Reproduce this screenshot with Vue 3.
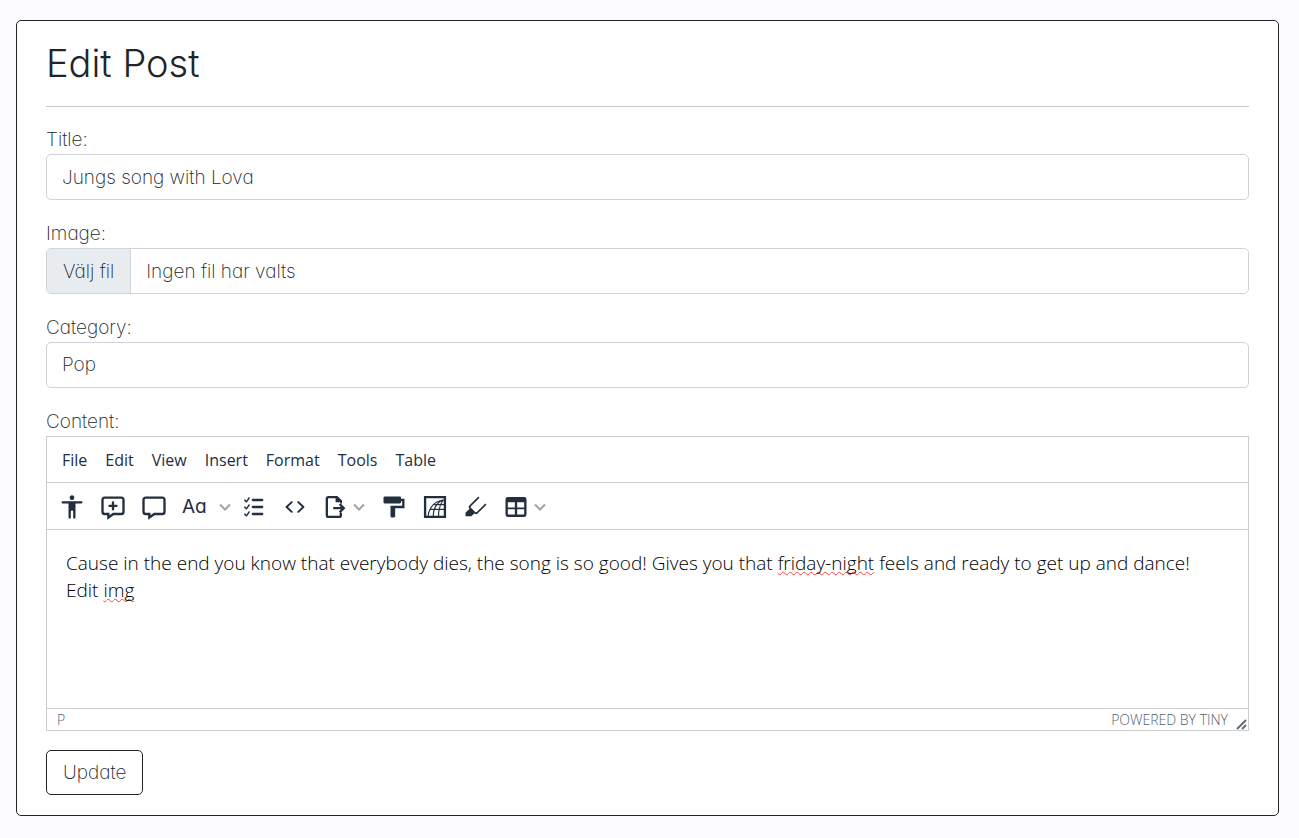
<script setup>
import { ref } from 'vue'

const title = ref('Jungs song with Lova')
const category = ref('Pop')
const menus = ['File', 'Edit', 'View', 'Insert', 'Format', 'Tools', 'Table']
</script>

<template>
  <main class="card">
    <h1>Edit Post</h1>
    <hr />
    <form @submit.prevent>
      <div class="field">
        <label for="title">Title:</label>
        <input id="title" v-model="title" class="control" type="text" />
      </div>
      <div class="field">
        <label for="image">Image:</label>
        <div class="control file">
          <input id="image" class="file-input" type="file" />
          <span class="file-button">Välj fil</span>
          <span class="file-name">Ingen fil har valts</span>
        </div>
      </div>
      <div class="field">
        <label for="category">Category:</label>
        <select id="category" v-model="category" class="control">
          <option>Pop</option>
        </select>
      </div>
      <div class="field">
        <label id="content-label" for="content">Content:</label>
        <div class="editor">
          <div class="menubar" role="menubar">
            <button v-for="m in menus" :key="m" type="button" role="menuitem">{{ m }}</button>
          </div>
          <div class="toolbar" role="toolbar" aria-label="Formatting">
            <button type="button" aria-label="Accessibility checker">
              <svg viewBox="0 0 24 24"><path d="M12 2a2 2 0 0 1 2 2 2 2 0 0 1-2 2 2 2 0 0 1-2-2c0-1.100.9-2 2-2Zm8 7h-5v12c0 .6-.4 1-1 1a1 1 0 0 1-1-1v-5c0-.6-.4-1-1-1a1 1 0 0 0-1 1v5c0 .6-.4 1-1 1a1 1 0 0 1-1-1V9H4a1 1 0 1 1 0-2h16c.6 0 1 .4 1 1s-.4 1-1 1Z" /></svg>
            </button>
            <button type="button" aria-label="Add comment">
              <svg viewBox="0 0 24 24"><path d="m9 19 3-2h7c.6 0 1-.4 1-1V6c0-.6-.4-1-1-1H5a1 1 0 0 0-1 1v10c0 .6.4 1 1 1h4v2Zm-2 4v-4H5a3 3 0 0 1-3-3V6a3 3 0 0 1 3-3h14a3 3 0 0 1 3 3v10a3 3 0 0 1-3 3h-6.400L7 23Z" /><path d="M13 10h2a1 1 0 0 1 0 2h-2v2a1 1 0 0 1-2 0v-2H9a1 1 0 0 1 0-2h2V8a1 1 0 0 1 2 0v2Z" /></svg>
            </button>
            <button type="button" aria-label="Show comments">
              <svg viewBox="0 0 24 24"><path d="m9 19 3-2h7c.6 0 1-.4 1-1V6c0-.6-.4-1-1-1H5a1 1 0 0 0-1 1v10c0 .6.4 1 1 1h4v2Zm-2 4v-4H5a3 3 0 0 1-3-3V6a3 3 0 0 1 3-3h14a3 3 0 0 1 3 3v10a3 3 0 0 1-3 3h-6.400L7 23Z" /></svg>
            </button>
            <button type="button" class="split case" aria-label="Change case">
              <span>Aa</span>
              <svg class="chevron" viewBox="0 0 12 12"><path d="M1 3.500 6 8.500 11 3.500" /></svg>
            </button>
            <button type="button" aria-label="Checklist">
              <svg viewBox="0 0 24 24"><path d="M11 17h8a1 1 0 0 1 0 2h-8a1 1 0 0 1 0-2Zm0-6h8a1 1 0 0 1 0 2h-8a1 1 0 0 1 0-2Zm0-6h8a1 1 0 0 1 0 2h-8a1 1 0 0 1 0-2ZM7.200 16c.2-.4.6-.5.9-.3.3.2.4.6.2 1L6 20c-.2.3-.7.4-1 0l-1.300-1.300a.7.7 0 0 1 0-1c.3-.2.7-.2 1 0l.7.9 1.800-2.600Zm0-6c.2-.4.6-.5.9-.3.3.2.4.6.2 1L6 14c-.2.3-.7.4-1 0l-1.300-1.300a.7.7 0 0 1 0-1c.3-.2.7-.2 1 0l.7.9L7.200 10Zm0-6c.2-.4.6-.5.9-.3.3.2.4.6.2 1L6 8c-.2.3-.7.4-1 0L3.700 6.700a.7.7 0 0 1 0-1c.3-.2.7-.2 1 0l.7.9L7.200 4Z" /></svg>
            </button>
            <button type="button" aria-label="Source code">
              <svg viewBox="0 0 24 24"><path d="M9.800 15.700c.3.3.3.8 0 1-.3.4-.9.4-1.200 0l-4.400-4.100a.8.8 0 0 1 0-1.200l4.400-4.200c.3-.3.9-.3 1.200 0 .3.3.3.8 0 1.100L6 12l3.800 3.700Zm4.400 0c-.3.3-.3.8 0 1 .4.4.9.4 1.200 0l4.400-4.100c.3-.3.3-.9 0-1.200l-4.400-4.200a.8.8 0 0 0-1.200 0c-.3.3-.3.8 0 1.100L18 12l-3.800 3.700Z" /></svg>
            </button>
            <button type="button" class="split" aria-label="Export">
              <svg viewBox="0 0 24 24"><path class="line" d="M17 17v2a1.500 1.500 0 0 1-1.500 1.500h-9A1.500 1.500 0 0 1 5 19V5a1.500 1.500 0 0 1 1.500-1.500H13M10.500 13H19M16 9.500l3.500 3.500L16 16.500" /><path d="M12.500 2.500h1.500L18 6.500V9h-1.500V8h-4Z" /></svg>
              <svg class="chevron" viewBox="0 0 12 12"><path d="M1 3.500 6 8.500 11 3.500" /></svg>
            </button>
            <button type="button" aria-label="Format painter">
              <svg viewBox="0 0 24 24"><path d="M18 5V4c0-.5-.4-1-1-1H4a1 1 0 0 0-1 1v4c0 .6.5 1 1 1h13c.6 0 1-.4 1-1V7h1v4H9v9c0 .6.4 1 1 1h2c.6 0 1-.4 1-1v-7h8V5h-3Z" /></svg>
            </button>
            <button type="button" aria-label="Page embed">
              <svg viewBox="0 0 24 24"><path class="line" d="M3.500 3.500h17v17h-17Z" /><path class="thin" d="M6 20C7 12 12 6.500 20 6M10.500 20c0-6 3-11.500 8-14M15 20c0-5 1-10 4-14M8.500 14H20M11.500 10H20" /></svg>
            </button>
            <button type="button" aria-label="Permanent pen">
              <svg viewBox="0 0 24 24"><path d="M10.500 17.500 8 20H3v-3l3.500-3.500a2 2 0 0 1 0-3L14 3l1 1-7.300 7.300a1 1 0 0 0 0 1.400l3.600 3.600c.4.4 1 .4 1.400 0L20 9l1 1-7.600 7.600a2 2 0 0 1-2.800 0l-.1-.1Z" /></svg>
            </button>
            <button type="button" class="split" aria-label="Table">
              <svg viewBox="0 0 24 24"><path fill-rule="evenodd" d="M19 3.500a2 2 0 0 1 2 2v13a2 2 0 0 1-2 2H5a2 2 0 0 1-2-2v-13c0-1.100.9-2 2-2h14ZM5 14v4.500h6V14H5Zm14 0h-6v4.500h6V14Zm0-6h-6v4.500h6V8ZM5 12.500h6V8H5v4.500Z" /></svg>
              <svg class="chevron" viewBox="0 0 12 12"><path d="M1 3.500 6 8.500 11 3.500" /></svg>
            </button>
          </div>
          <div id="content" class="body" contenteditable="true" spellcheck="false" role="textbox" aria-multiline="true" aria-labelledby="content-label">
            <p>Cause in the end you know that everybody dies, the song is so good! Gives you that <span class="typo">friday-night</span> feels and ready to get up and dance!<br />Edit <span class="typo">img</span></p>
          </div>
          <div class="status">
            <span>P</span>
            <a href="#">POWERED BY TINY</a>
            <svg class="resize" viewBox="0 0 12 12"><path d="M1 11 10 2M6 11 10 7" /></svg>
          </div>
        </div>
      </div>
      <button class="submit" type="submit">Update</button>
    </form>
  </main>
</template>

<style>
body {
  background: #fcfbff;
}
</style>

<style scoped>
* {
  box-sizing: border-box;
}
.card {
  margin: 20px 20px 20px 16px;
  padding: 20px 29px;
  background: #fff;
  border: 1px solid #212529;
  border-radius: 5px;
  color: #212529;
  font: 200 19px/28px Inter, sans-serif;
  font-feature-settings: 'cv11';
}
h1 {
  margin: 0 0 20px;
  font-size: 38px;
  font-weight: 300;
  line-height: 45px;
}
hr {
  margin: 0 0 19px;
  border: 0;
  border-top: 1px solid #c8c9ca;
}
.field {
  margin-bottom: 20px;
}
.field:last-of-type {
  margin-bottom: 19px;
}
label {
  display: block;
}
input,
select,
button {
  font: inherit;
  font-feature-settings: inherit;
  color: inherit;
}
.control {
  display: block;
  width: 100%;
  height: 46px;
  padding: 0 15px;
  background: #fff;
  border: 1px solid #ced4da;
  border-radius: 5px;
  appearance: none;
}
.file {
  position: relative;
  display: flex;
  align-items: stretch;
  padding: 0;
  overflow: hidden;
  line-height: 46px;
}
.file-input {
  position: absolute;
  inset: 0;
  opacity: 0;
}
.file-button {
  padding: 0 16px;
  background: #e9ecef;
  border-right: 1px solid #ced4da;
}
.file-name {
  padding-left: 15px;
}
.editor {
  border: 1px solid #ccc;
  color: #222f3e;
  font-family: 'Open Sans', sans-serif;
  font-feature-settings: normal;
}
.menubar,
.toolbar {
  display: flex;
  align-items: center;
  border-bottom: 1px solid #ccc;
}
.menubar {
  height: 46px;
  gap: 18px;
  padding: 0 15px;
}
.toolbar {
  height: 47px;
  padding: 2px 4px 0;
}
.editor button {
  padding: 0;
  border: 0;
  background: none;
}
.menubar button {
  font-size: 16px;
  font-weight: 400;
}
.toolbar button {
  display: flex;
  align-items: center;
  justify-content: center;
  width: 41px;
  height: 40px;
}
.toolbar .split {
  justify-content: flex-start;
  gap: 4px;
  width: 58px;
  padding-left: 6px;
}
.toolbar .case {
  gap: 12px;
  width: 59px;
  padding-left: 8px;
  font: 400 19px/28px Inter, sans-serif;
  font-feature-settings: 'cv11';
}
svg {
  flex: none;
  width: 28px;
  height: 28px;
  fill: currentColor;
}
.line,
.thin {
  fill: none;
  stroke: currentColor;
  stroke-width: 2;
}
.thin {
  stroke-width: 1;
}
.chevron {
  width: 12px;
  height: 12px;
  fill: none;
  stroke: #9ca2aa;
  stroke-width: 2;
}
.body {
  min-height: 178px;
  padding: 20px 19px;
  color: #000;
  font-size: 19px;
  font-weight: 300;
  line-height: 27px;
  outline: none;
}
.body p {
  margin: 0;
}
.typo {
  text-decoration: underline wavy #f44 1px;
  text-decoration-skip-ink: none;
  text-underline-offset: 1px;
}
.status {
  display: flex;
  align-items: center;
  height: 22px;
  padding-left: 10px;
  border-top: 1px solid #ccc;
  color: #56606d;
  font-size: 14px;
  font-weight: 300;
  line-height: 21px;
}
.status a {
  margin-left: auto;
  color: inherit;
  text-decoration: none;
}
.resize {
  align-self: flex-end;
  width: 12px;
  height: 12px;
  margin-left: 8px;
  fill: none;
  stroke: #646d78;
  stroke-width: 2;
}
.submit {
  display: block;
  height: 45px;
  padding: 0 16px;
  background: #fff;
  border: 1px solid #212529;
  border-radius: 5px;
}
</style>
